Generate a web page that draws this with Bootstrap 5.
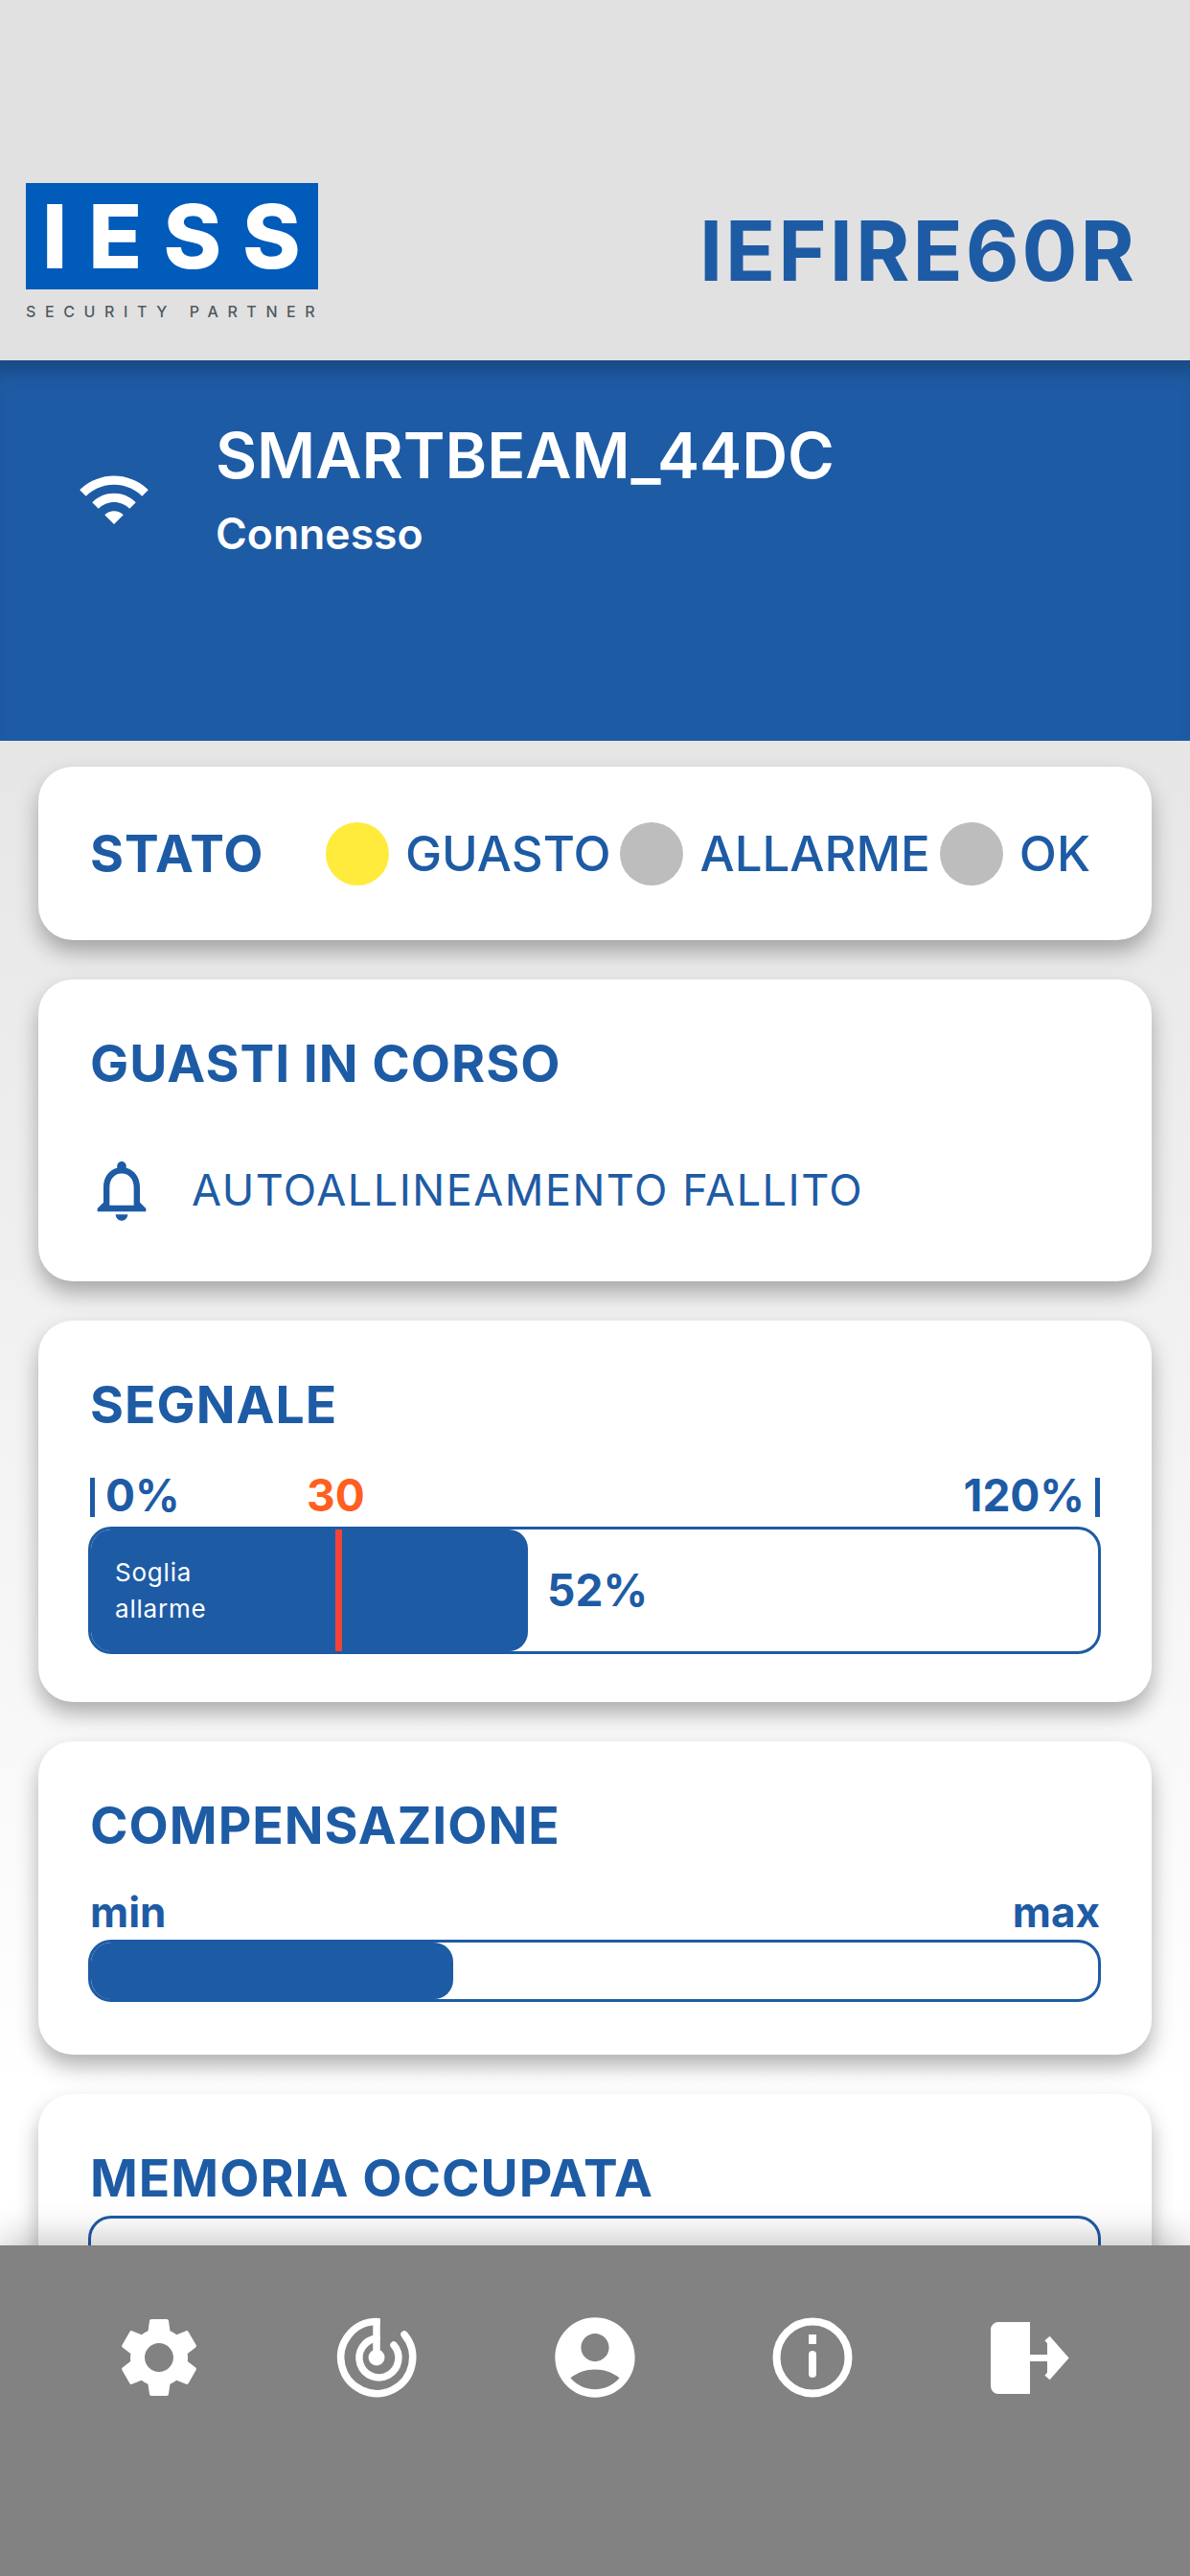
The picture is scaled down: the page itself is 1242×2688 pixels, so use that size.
<!DOCTYPE html>
<html lang="it">
<head>
  <meta charset="UTF-8" />
  <meta name="viewport" content="width=device-width, initial-scale=1.0" />
  <title>IEFIRE60R</title>
  <link href="https://cdn.jsdelivr.net/npm/bootstrap@5.3.0/dist/css/bootstrap.min.css" rel="stylesheet"/>
  <style>
    body { font-family: Inter, "Liberation Sans", sans-serif; color: #1e5ba5; width: 1242px; height: 2688px; overflow: hidden; }
    .app-top { height: 376px; background: #e1e1e1; padding: 191px 55px 0 27px; position: relative; z-index: 2; }
    .logo-box { width: 305px; height: 111px; background: #015bbb; color: #fff; font-weight: 800; font-size: 92px; line-height: 111px; letter-spacing: 22px; padding-left: 17px; white-space: nowrap; overflow: hidden; }
    .logo-sub { width: 305px; font-size: 16px; line-height: 18px; letter-spacing: 9.6px; color: #4f5b5f; margin-top: 14px; white-space: nowrap; font-weight: 500; }
    .model { font-size: 86px; font-weight: 700; line-height: 1; letter-spacing: 3px; margin-top: 28px; }
    .app-band { height: 397px; background: #1e5ba5; color: #fff; padding: 60px 0 0 83px; box-shadow: inset 0 22px 22px -14px rgba(0,0,0,.25); }
    .band-icon { width: 78px; margin-top: 46px; margin-right: 67px; margin-left: -3px; }
    .band-title { font-size: 66.3px; font-weight: 600; line-height: 79px; }
    .band-sub { font-size: 44.500px; font-weight: 600; line-height: 54px; margin-top: 15px; }
    .app-main { height: 1570px; overflow: hidden; padding: 27px 40px 0; background: linear-gradient(#e6e6e6, #fff 90%); }
    .panel { border: 0; border-radius: 36px; box-shadow: 0 12px 22px rgba(0,0,0,.3); margin-bottom: 41px; padding: 0 54px; }
    .panel-title { font-size: 53.5px; font-weight: 700; line-height: 60px; letter-spacing: 1px; }
    .status-row { height: 181px; }
    .status-title { width: 255px; }
    .status-dot { width: 66px; height: 66px; border-radius: 50%; background: #bdbdbd; flex-shrink: 0; }
    .status-dot.on { background: #ffeb3b; }
    .status-text { font-size: 51px; font-weight: 500; line-height: 60px; margin: 0 10px 0 17px; white-space: nowrap; }
    .fault-row { font-size: 45px; line-height: 64px; letter-spacing: 1.5px; height: 64px; margin-top: 70px; margin-bottom: 63px; }
    .fault-row svg { width: 76px; height: 76px; margin-right: 35px; margin-left: -5px; }
    .scale-row { position: relative; font-size: 46px; font-weight: 700; line-height: 56px; height: 56px; }
    .scale-row.short-label { font-size: 44px; }
    .scale-mark { position: absolute; left: 226px; top: 0; color: #ff5f1f; }
    .tick { display: inline-block; width: 5px; height: 41px; background: #1e5ba5; vertical-align: -6px; }
    .level { position: relative; border: 3px solid #1e5ba5; border-radius: 24px; background: #fff; margin-left: -2px; margin-right: -1px; overflow: hidden; }
    .level-fill { background: #1e5ba5; border-radius: 0 20px 20px 0; flex-shrink: 0; }
    .level-line { position: absolute; top: -3px; bottom: -3px; left: 255px; width: 7px; background: #f44336; }
    .level-text { color: #fff; font-size: 26px; line-height: 38px; padding-left: 25px; letter-spacing: .8px; }
    .level-value { font-size: 46px; font-weight: 700; margin-left: 20px; }
    .signal-title { margin-top: 58px; }
    .signal-scale { margin-top: 36px; }
    .signal-level { height: 133px; margin-top: 5px; margin-bottom: 50px; }
    .comp-level { height: 65px; margin-top: 9px; margin-bottom: 55px; }
    .app-nav { height: 345px; background: #828282; padding: 67px 52px 0; position: relative; z-index: 2; box-shadow: 0 -8px 34px rgba(0,0,0,.22); }
    .nav-cell { width: 227.5px; text-align: center; }
    .nav-cell svg { width: 100px; height: 100px; fill: #fff; }
  </style>
</head>
<body class="m-0">
  <header class="app-top d-flex justify-content-between align-items-start">
    <div>
      <div class="logo-box">IESS</div>
      <div class="logo-sub">SECURITY PARTNER</div>
    </div>
    <div class="model">IEFIRE60R</div>
  </header>

  <section class="app-band d-flex align-items-start">
    <svg class="band-icon" viewBox="0 0 24 24" fill="#fff"><path d="M1 9l2 2c4.97-4.97 13.03-4.97 18 0l2-2C16.93 2.93 7.08 2.93 1 9zm8 8l3 3 3-3c-1.65-1.66-4.34-1.66-6 0zm-4-4l2 2c2.76-2.76 7.24-2.76 10 0l2-2C15.14 9.14 8.87 9.14 5 13z"/></svg>
    <div>
      <div class="band-title">SMARTBEAM_44DC</div>
      <div class="band-sub">Connesso</div>
    </div>
  </section>

  <main class="app-main">
    <div class="card panel">
      <div class="status-row d-flex align-items-center">
        <div class="panel-title status-title">STATO</div>
        <span class="status-dot on"></span><span class="status-text">GUASTO</span>
        <span class="status-dot"></span><span class="status-text">ALLARME</span>
        <span class="status-dot"></span><span class="status-text">OK</span>
      </div>
    </div>

    <div class="card panel">
      <div class="panel-title signal-title">GUASTI IN CORSO</div>
      <div class="fault-row d-flex align-items-center">
        <svg viewBox="0 0 24 24" fill="#1e5ba5"><path d="M12 22c1.1 0 2-.9 2-2h-4c0 1.1.9 2 2 2zm6-6v-5c0-3.07-1.63-5.64-4.5-6.32V4c0-.83-.67-1.5-1.5-1.5s-1.5.67-1.5 1.5v.68C7.64 5.36 6 7.92 6 11v5l-2 2v1h16v-1l-2-2zm-2 1H8v-6c0-2.48 1.51-4.5 4-4.5s4 2.02 4 4.5v6z"/></svg>
        <span>AUTOALLINEAMENTO FALLITO</span>
      </div>
    </div>

    <div class="card panel">
      <div class="panel-title signal-title">SEGNALE</div>
      <div class="scale-row signal-scale d-flex justify-content-between">
        <span><i class="tick"></i> 0%</span>
        <span class="scale-mark">30</span>
        <span>120% <i class="tick"></i></span>
      </div>
      <div class="level signal-level d-flex align-items-center">
        <div class="level-fill h-100 d-flex align-items-center" style="width:456px">
          <div class="level-text">Soglia<br>allarme</div>
        </div>
        <span class="level-value">52%</span>
        <span class="level-line"></span>
      </div>
    </div>

    <div class="card panel">
      <div class="panel-title signal-title">COMPENSAZIONE</div>
      <div class="scale-row short-label d-flex justify-content-between mt-4 pt-2">
        <span>min</span><span>max</span>
      </div>
      <div class="level comp-level">
        <div class="level-fill h-100" style="width:378px"></div>
      </div>
    </div>

    <div class="card panel">
      <div class="panel-title signal-title">MEMORIA OCCUPATA</div>
      <div class="level comp-level"></div>
    </div>
  </main>

  <nav class="app-nav d-flex">
    <div class="nav-cell">
      <svg viewBox="0 0 24 24"><path d="M19.14 12.94c.04-.3.06-.61.06-.94 0-.32-.02-.64-.07-.94l2.03-1.58c.18-.14.23-.41.12-.61l-1.92-3.32c-.12-.22-.37-.29-.59-.22l-2.39.96c-.5-.38-1.03-.7-1.62-.94l-.36-2.54c-.04-.24-.24-.41-.48-.41h-3.84c-.24 0-.43.17-.47.41l-.36 2.54c-.59.24-1.13.57-1.62.94l-2.39-.96c-.22-.08-.47 0-.59.22L2.74 8.87c-.12.21-.08.47.12.61l2.03 1.58c-.05.3-.09.63-.09.94s.02.64.07.94l-2.03 1.58c-.18.14-.23.41-.12.61l1.92 3.32c.12.22.37.29.59.22l2.39-.96c.5.38 1.03.7 1.62.94l.36 2.54c.05.24.24.41.48.41h3.84c.24 0 .44-.17.47-.41l.36-2.54c.59-.24 1.13-.56 1.62-.94l2.39.96c.22.08.47 0 .59-.22l1.92-3.32c.12-.22.07-.47-.12-.61l-2.01-1.58zM12 15.6c-1.98 0-3.6-1.62-3.6-3.6s1.62-3.6 3.6-3.6 3.6 1.62 3.6 3.6-1.62 3.6-3.6 3.6z"/></svg>
    </div>
    <div class="nav-cell">
      <svg viewBox="0 0 100 100">
        <g fill="none" stroke="#fff" stroke-width="7.5" stroke-linecap="round">
          <path d="M50 12.5A37.5 37.5 0 1 0 79 26"/>
          <path d="M50 30A20.500 20.500 0 1 0 68 37"/>
          <path stroke-linecap="butt" d="M50 9V50"/>
        </g>
        <circle cx="50" cy="50" r="8.500" fill="#fff"/>
      </svg>
    </div>
    <div class="nav-cell">
      <svg viewBox="0 0 24 24"><path d="M12 2C6.48 2 2 6.48 2 12s4.48 10 10 10 10-4.48 10-10S17.52 2 12 2zm0 4c1.93 0 3.5 1.57 3.5 3.5S13.93 13 12 13s-3.5-1.57-3.500-3.5S10.07 6 12 6zm0 14c-2.03 0-4.43-.82-6.14-2.88C7.55 15.8 9.68 15 12 15s4.45.8 6.14 2.12C16.43 19.18 14.03 20 12 20z"/></svg>
    </div>
    <div class="nav-cell">
      <svg viewBox="0 0 100 100">
        <circle cx="50" cy="50" r="37.500" fill="none" stroke="#fff" stroke-width="8"/>
        <rect x="46" y="26" width="8" height="10"/>
        <rect x="46" y="43" width="8" height="28" rx="4"/>
      </svg>
    </div>
    <div class="nav-cell">
      <svg viewBox="0 0 100 100" fill="none" stroke="#fff">
        <path d="M49 17H16a4 4 0 0 0-4 4V80a4 4 0 0 0 4 4H49" stroke-width="8"/>
        <path d="M33 50.500H85M67 30L85 50.500L67 71" stroke-width="7"/>
      </svg>
    </div>
  </nav>
</body>
</html>
